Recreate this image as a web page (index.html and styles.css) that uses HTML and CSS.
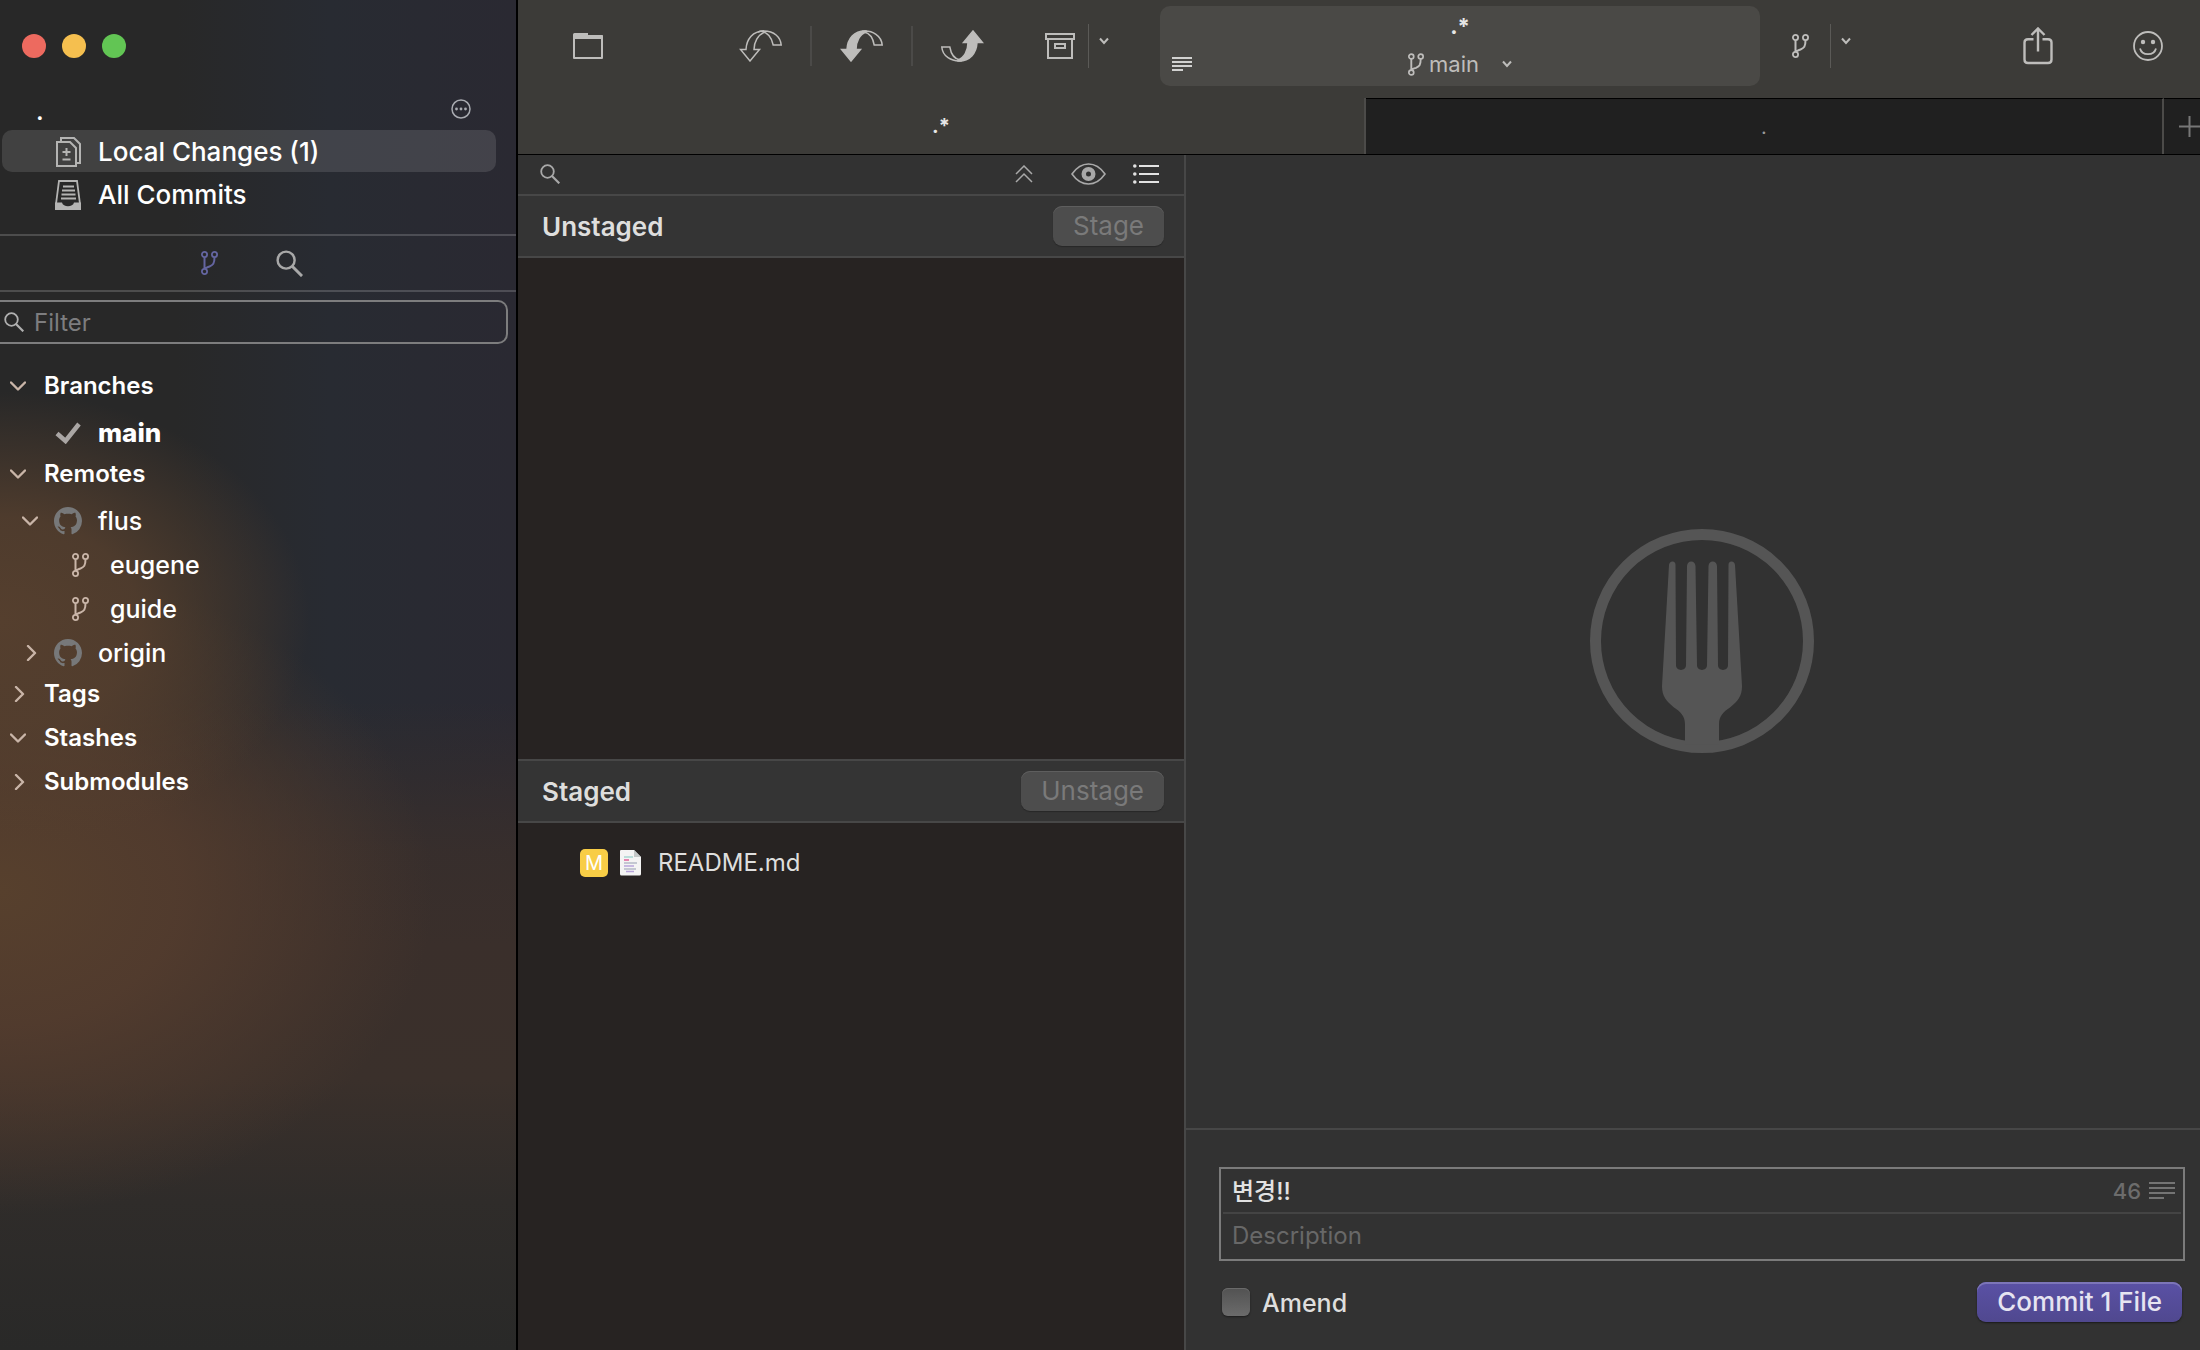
FILE: index.html
```html
<!DOCTYPE html>
<html lang="en">
<head>
<meta charset="utf-8">
<meta name="viewport" content="width=device-width, initial-scale=1">
<title>Local Changes</title>
<link rel="stylesheet" href="styles.css">
</head>
<body>
<svg class="sprite" aria-hidden="true">
  <symbol id="branch" viewBox="0 0 17 24">
    <g fill="none" stroke="currentColor" stroke-width="1.8">
      <circle cx="3.5" cy="3.5" r="2.6"/><circle cx="13.5" cy="3.5" r="2.6"/><circle cx="3.5" cy="20.5" r="2.6"/>
      <path d="M3.5 6v12M13.5 6c0 7-1.500 8-5 9.500-3 1.200-4.500 1.500-5 2.500" stroke-width="2"/>
    </g>
  </symbol>
  <symbol id="search" viewBox="0 0 20 20">
    <circle cx="7.500" cy="7.500" r="6.300" fill="none" stroke="currentColor" stroke-width="1.800"/>
    <path d="M12 12l7.300 7.300" stroke="currentColor" stroke-width="2.200"/>
  </symbol>
  <symbol id="down" viewBox="0 0 16 16">
    <path d="M1 4.500l7 7 7-7" fill="none" stroke="currentColor" stroke-width="2.400" stroke-linecap="round" stroke-linejoin="round"/>
  </symbol>
  <symbol id="right" viewBox="0 0 16 16">
    <path d="M6 1l7 7-7 7" fill="none" stroke="currentColor" stroke-width="2.400" stroke-linecap="round" stroke-linejoin="round"/>
  </symbol>
  <symbol id="small-down" viewBox="0 0 10 8">
    <path d="M1 1.500l4 4.500 4-4.500" fill="none" stroke="currentColor" stroke-width="2"/>
  </symbol>
  <symbol id="github" viewBox="0 0 16 16">
    <path fill="currentColor" d="M8 0C3.580 0 0 3.580 0 8c0 3.540 2.290 6.530 5.470 7.590.4.070.55-.17.55-.38 0-.19-.01-.82-.01-1.490-2.010.37-2.530-.49-2.690-.94-.09-.23-.48-.94-.82-1.130-.28-.15-.68-.52-.01-.53.63-.01 1.080.58 1.230.82.72 1.210 1.870.87 2.330.66.070-.52.28-.87.51-1.070-1.780-.2-3.640-.89-3.640-3.950 0-.87.31-1.590.82-2.150-.08-.2-.36-1.020.08-2.120 0 0 .67-.21 2.200.82.64-.18 1.320-.27 2-.27s1.360.09 2 .27c1.530-1.040 2.200-.82 2.200-.82.44 1.100.16 1.920.08 2.120.51.56.82 1.270.82 2.150 0 3.070-1.870 3.750-3.650 3.950.29.25.54.73.54 1.480 0 1.070-.01 1.930-.01 2.200 0 .21.15.46.55.38A8.010 8.010 0 0 0 16 8c0-4.420-3.580-8-8-8z"/>
  </symbol>
  <symbol id="archive" viewBox="0 0 30 26">
    <path d="M1 1h28v5H1zM3 6v19h24V6M10 11h10v4H10z" fill="none" stroke="currentColor" stroke-width="2"/>
  </symbol>
</svg>

<div class="app">
  <aside class="sidebar">
    <div class="lights">
      <button class="light close" aria-label="Close"></button>
      <button class="light minimize" aria-label="Minimize"></button>
      <button class="light zoom" aria-label="Zoom"></button>
    </div>
    <div class="repo">
      <span class="repo-name">.</span>
      <button class="icon-button" aria-label="More">
        <svg width="20" height="20" viewBox="0 0 20 20"><circle cx="10" cy="10" r="9" fill="none" stroke="currentColor" stroke-width="1.500"/><g fill="currentColor"><circle cx="5.500" cy="10" r="1.400"/><circle cx="10" cy="10" r="1.400"/><circle cx="14.500" cy="10" r="1.400"/></g></svg>
      </button>
    </div>
    <nav class="views">
      <a class="view selected" href="#changes">
        <svg width="26" height="30" viewBox="0 0 26 30" fill="none" stroke="currentColor" stroke-width="2"><path d="M2 5h13l6 6v18H2zM6 5V1h13l6 6v19h-4M11.500 11v8M7.500 15h8M7.500 22.500h8"/></svg>
        Local Changes (1)
      </a>
      <a class="view" href="#commits">
        <svg width="26" height="30" viewBox="0 0 26 30" fill="none" stroke="currentColor" stroke-width="1.800"><path d="M1 24L4 1h18l3 23"/><path d="M8 6.500h11M7 10.500h13M6.500 14.500h14M6 18.500h15"/><path d="M0 22.500h7c1 5 11 5 12 0h7V30H0z" fill="currentColor" stroke="none"/></svg>
        All Commits
      </a>
    </nav>
    <div class="modes">
      <button class="icon-button mode-branch" aria-label="Branches"><svg width="17" height="24"><use href="#branch"/></svg></button>
      <button class="icon-button mode-search" aria-label="Search"><svg width="27" height="27"><use href="#search"/></svg></button>
    </div>
    <label class="filter">
      <svg width="20" height="20"><use href="#search"/></svg>
      <input type="text" placeholder="Filter" aria-label="Filter">
    </label>
    <ul class="tree">
      <li class="group"><svg width="16" height="16"><use href="#down"/></svg>Branches</li>
      <li class="item current"><svg class="mark" width="26" height="22" viewBox="0 0 26 22"><path d="M2 11.500l8.500 7.500L24 2" fill="none" stroke="currentColor" stroke-width="4.500"/></svg>main</li>
      <li class="group"><svg width="16" height="16"><use href="#down"/></svg>Remotes</li>
      <li class="item remote"><svg width="16" height="16"><use href="#down"/></svg><svg class="hub" width="28" height="28"><use href="#github"/></svg>flus</li>
      <li class="item leaf"><svg width="17" height="24"><use href="#branch"/></svg>eugene</li>
      <li class="item leaf"><svg width="17" height="24"><use href="#branch"/></svg>guide</li>
      <li class="item remote"><svg width="16" height="16"><use href="#right"/></svg><svg class="hub" width="28" height="28"><use href="#github"/></svg>origin</li>
      <li class="group"><svg width="16" height="16"><use href="#right"/></svg>Tags</li>
      <li class="group"><svg width="16" height="16"><use href="#down"/></svg>Stashes</li>
      <li class="group"><svg width="16" height="16"><use href="#right"/></svg>Submodules</li>
    </ul>
  </aside>

  <div class="main">
    <header class="toolbar">
      <button class="icon-button open" aria-label="Open repository">
        <svg width="30" height="26" viewBox="0 0 30 26"><path d="M1 25V3h28v22z" fill="none" stroke="currentColor" stroke-width="2" stroke-linejoin="round"/><path d="M0 6V1.500Q0 0 1.500 0H15v2h13.500Q30 2 30 3.500V6z" fill="currentColor"/></svg>
      </button>
      <div class="sync">
        <button class="icon-button" aria-label="Fetch">
          <svg width="43" height="32" viewBox="0 0 43 32" fill="none" stroke="currentColor" stroke-width="1.500"><path d="M19 2C22 .8 23 1 25 1c10 0 16.500 6 17.200 14h-8C33 8 28 1.500 22 1.300"/><path d="M25 1C14 1 7.500 9 7 19.500H1.500L11 31l9.500-11.500H15C15 12 19 5 25 2.500"/></svg>
        </button>
        <span class="rule"></span>
        <button class="icon-button" aria-label="Pull">
          <svg width="43" height="32" viewBox="0 0 43 32" fill="none" stroke="currentColor" stroke-width="1.500"><path d="M22 1.200C33 0 41.500 6 42.200 15h-8C33 8 29 3 24 2"/><path d="M26 1C14 .5 7.500 9 7 19.500H1.500L11 31l9.500-11.500H16C16 11 20 4 26 2z" fill="currentColor"/></svg>
        </button>
        <span class="rule"></span>
        <button class="icon-button" aria-label="Push">
          <svg width="43" height="32" viewBox="0 0 43 32" fill="none" stroke="currentColor" stroke-width="1.500"><g transform="rotate(180 21.500 16)"><path d="M22 1.200C33 0 41.500 6 42.200 15h-8C33 8 29 3 24 2"/><path d="M26 1C14 .5 7.500 9 7 19.500H1.500L11 31l9.500-11.500H16C16 11 20 4 26 2z" fill="currentColor"/></g></svg>
        </button>
      </div>
      <div class="split">
        <button class="icon-button" aria-label="Stash"><svg width="30" height="26"><use href="#archive"/></svg></button>
        <button class="icon-button more" aria-label="Stash options"><svg width="10" height="8"><use href="#small-down"/></svg></button>
      </div>
      <div class="status">
        <svg width="20" height="14" viewBox="0 0 20 14"><path d="M0 1h20M0 5h20M0 9h20M0 13h11" stroke="currentColor" stroke-width="2"/></svg>
        <div class="status-text">
          <strong>.*</strong>
          <button class="branch-button"><svg width="16" height="23"><use href="#branch"/></svg>main<svg class="caret" width="10" height="8"><use href="#small-down"/></svg></button>
        </div>
      </div>
      <div class="split branch-split">
        <button class="icon-button" aria-label="New branch"><svg width="17" height="24"><use href="#branch"/></svg></button>
        <button class="icon-button more" aria-label="Branch options"><svg width="10" height="8"><use href="#small-down"/></svg></button>
      </div>
      <div class="end">
        <button class="icon-button" aria-label="Share">
          <svg width="30" height="38" viewBox="0 0 30 38" fill="none" stroke="currentColor" stroke-width="2.400"><path d="M10.500 12.200H5Q1.500 12.200 1.500 15.500v17Q1.500 36 5 36h20q3.500 0 3.500-3.500v-17q0-3.300-3.500-3.300h-5.500M15 24.500V2M8.500 8L15 1.500 21.500 8"/></svg>
        </button>
        <button class="icon-button" aria-label="Feedback">
          <svg width="30" height="30" viewBox="0 0 30 30" fill="none" stroke="currentColor" stroke-width="1.800"><circle cx="15" cy="15" r="14"/><path d="M7 17.500c2 7.500 14 7.500 16 0"/><g fill="currentColor" stroke="none"><circle cx="10" cy="11" r="2.200"/><circle cx="20" cy="11" r="2.200"/></g></svg>
        </button>
      </div>
    </header>
    <div class="tabs">
      <button class="tab active">.*</button>
      <button class="tab">.</button>
      <button class="tab add" aria-label="New tab"><svg width="21" height="21" viewBox="0 0 21 21"><path d="M0 10.500h21M10.500 0v21" stroke="currentColor" stroke-width="2"/></svg></button>
    </div>

    <div class="panes">
      <section class="files">
        <div class="list-tools">
          <svg width="20" height="20"><use href="#search"/></svg>
          <button class="icon-button collapse" aria-label="Collapse"><svg width="18" height="18" viewBox="0 0 18 18" fill="none" stroke="currentColor" stroke-width="1.500"><path d="M1 9l8-8 8 8M1 17l8-8 8 8"/></svg></button>
          <button class="icon-button eye" aria-label="Preview"><svg width="35" height="22" viewBox="0 0 35 22"><path d="M1 11Q8 1 17.500 1T34 11Q27 21 17.500 21T1 11z" fill="none" stroke="currentColor" stroke-width="1.600"/><path fill="currentColor" fill-rule="evenodd" d="M17.500 4a7 7 0 1 0 0 14 7 7 0 1 0 0-14zm0 4.500a2.500 2.500 0 1 1 0 5 2.500 2.500 0 1 1 0-5z"/></svg></button>
          <button class="icon-button rows" aria-label="List view"><svg width="26" height="20" viewBox="0 0 26 20" fill="currentColor"><circle cx="1.800" cy="2" r="1.800"/><circle cx="1.800" cy="10" r="1.800"/><circle cx="1.800" cy="18" r="1.800"/><path d="M6 1h20v2H6zM6 9h20v2H6zM6 17h20v2H6z"/></svg></button>
        </div>
        <div class="list-header"><h2>Unstaged</h2><button class="button" disabled>Stage</button></div>
        <ul class="list"></ul>
        <div class="list-header staged"><h2>Staged</h2><button class="button" disabled>Unstage</button></div>
        <ul class="list last">
          <li class="file">
            <span class="badge">M</span>
            <svg width="24" height="28" viewBox="0 0 24 28"><path d="M2 1h13l7 7v17q0 1.500-1.500 1.500h-18Q1 26.500 1 25V2q0-1 1-1z" fill="#f4f4f4"/><path d="M15 1v7h7z" fill="#c4c8c8"/><path d="M5 8h9" stroke="#a9d6d2" stroke-width="1.500"/><path d="M5 11h5" stroke="#e0629c" stroke-width="1.500"/><path d="M5 14h13M5 20h12" stroke="#b4b9c6" stroke-width="1.500"/><path d="M5 17h10M7 22.500h8" stroke="#b8a5dc" stroke-width="1.500"/></svg>
            README.md
          </li>
        </ul>
      </section>

      <section class="detail">
        <div class="empty">
          <svg width="224" height="224" viewBox="0 0 224 224">
            <circle cx="112" cy="112" r="106.500" fill="none" stroke="currentColor" stroke-width="11"/>
            <path fill="currentColor" d="M79 36q.5-3.500 3.500-3.500T85.500 36L86 136c0 6.500 10 6.500 10 0L97 37q.5-4.500 4.200-4.500T105.500 37L107 136c0 6.500 10 6.500 10 0l1.500-99q.5-4.500 4.200-4.500T127 37l1 99c0 6.500 10 6.500 10 0l.5-100q0-3.500 3-3.500t3.500 3.500l7 121c0 10-4 15-12 21.500-6 4-11 8-11 17v20H95v-20c0-9-5-13-11-17-8-6.500-12-11.500-12-21.500z"/>
          </svg>
        </div>
        <form class="commit">
          <div class="message">
            <div class="subject-row">
              <input class="subject" type="text" value="변경!!" aria-label="Subject">
              <span class="count">46</span>
              <svg width="26" height="20" viewBox="0 0 26 20"><path d="M0 2h26M0 7h26M0 12h26M0 17h15" stroke="currentColor" stroke-width="1.500"/></svg>
            </div>
            <textarea class="description" rows="1" placeholder="Description" aria-label="Description"></textarea>
          </div>
          <div class="actions">
            <label class="amend"><input type="checkbox"><span>Amend</span></label>
            <button class="button primary" type="button">Commit 1 File</button>
          </div>
        </form>
      </section>
    </div>
  </div>
</div>
</body>
</html>
```
FILE: styles.css
```css
* { box-sizing: border-box; }

body {
  margin: 0;
  background: #323232;
  color: #dededd;
  font-family: Inter, "Noto Sans CJK KR", sans-serif;
  font-size: 24px;
  line-height: 32px;
}

button, input, textarea { font: inherit; color: inherit; }
button { border: 0; padding: 0; background: none; }
svg { display: block; flex: none; }
ul { list-style: none; margin: 0; padding: 0; }
h2 { margin: 0; padding-top: 2px; font-size: 26px; font-weight: 600; }
.sprite { position: absolute; width: 0; height: 0; }
.icon-button { flex: none; }

.app {
  display: grid;
  grid-template-columns: 518px minmax(0, 1fr);
  min-height: 100vh;
}

/* Sidebar */
.sidebar {
  border-right: 2px solid #000;
  color: #fff;
  font-weight: 500;
  background:
    radial-gradient(ellipse 60% 17% at 0% 46%, #553f2e 0%, #553f2ed8 45%, #553f2e00 100%),
    radial-gradient(ellipse 84% 24% at 0% 66%, #57402d 0%, #553d2ed8 42%, #553c2e00 100%),
    linear-gradient(to bottom, #3a2f2b00 52%, #3a2f2bd0 63%, #3a2f2b 70%, #3a302b 80%, #2f2c2a 89%, #292928 100%),
    linear-gradient(to right, #282828 34%, #282b32 64%, #2a2932 100%);
}
.lights { display: flex; gap: 16px; padding: 34px 22px 0; }
.light { width: 24px; height: 24px; border-radius: 50%; }
.close { background: #ed6a5f; }
.minimize { background: #f5bf4f; }
.zoom { background: #62c554; }

.repo {
  display: flex;
  align-items: center;
  justify-content: space-between;
  height: 32px;
  margin-top: 36px;
  padding: 0 45px 0 36px;
}
.repo .icon-button { color: #a9abb1; padding-bottom: 2px; }
.repo-name { padding-top: 4px; font-weight: 600; }

.views { padding: 4px 20px 19px 2px; }
.view {
  display: flex;
  align-items: center;
  gap: 17px;
  height: 42px;
  padding: 2px 0 0 53px;
  border-radius: 10px;
  color: #fff;
  font-size: 26px;
  text-decoration: none;
}
.view + .view { margin-top: 1px; }
.view svg { color: #b4b4b3; }
.selected { background: #ffffff1e; }

.modes {
  display: flex;
  align-items: center;
  justify-content: center;
  gap: 58px;
  height: 58px;
  padding-right: 12px;
  border: solid #ffffff2c;
  border-width: 2px 0;
}
.mode-branch { color: #6465a0; }
.mode-search { color: #a8a8a8; }

.filter {
  display: flex;
  align-items: center;
  gap: 10px;
  height: 44px;
  margin: 8px 8px 0 0;
  padding-left: 4px;
  border: 2px solid #7d7d7e;
  border-left: 0;
  border-radius: 0 10px 10px 0;
  color: #b0b0b0;
}
.filter input { flex: 1; min-width: 0; padding: 2px 0 0; border: 0; background: none; outline: 0; }
.filter input::placeholder { color: #7d7d7f; opacity: 1; font-weight: 400; }

.tree { padding-top: 20px; }
.tree li { display: flex; align-items: center; height: 44px; }
.tree svg { color: #c9b5a8; }
.group { gap: 18px; padding-left: 10px; font-weight: 600; }
.tree .item { padding-top: 5px; font-size: 25px; }
.tree .current { padding-left: 55px; gap: 17px; font-size: 26px; font-weight: 800; }
.tree .mark { color: #aaa6a4; }
.remote { padding-left: 22px; gap: 16px; }
.tree .hub { color: #777879; }
.leaf { padding-left: 72px; gap: 21px; }

/* Toolbar */
.main { display: flex; flex-direction: column; min-width: 0; }
.toolbar {
  display: flex;
  align-items: center;
  height: 98px;
  padding: 0 37px 6px 55px;
  background: #3c3b38;
  color: #bebdbb;
}
.sync { display: flex; align-items: center; gap: 28px; margin-left: 136px; }
.rule { width: 2px; height: 40px; background: #4b4a48; }
.split { display: flex; align-items: center; gap: 13px; margin-left: 61px; }
.more { height: 44px; padding: 0 0 10px 10px; border-left: 1px solid #5b5a57; }
.status {
  display: grid;
  grid-template-columns: 20px 1fr 20px;
  align-items: end;
  flex: 1;
  height: 80px;
  margin-left: 51px;
  padding: 0 12px;
  border-radius: 10px;
  background: #4a4946;
}
.status > svg { margin-bottom: 15px; color: #d2d2d1; }
.status-text { display: flex; flex-direction: column; align-items: center; gap: 6px; padding-bottom: 6px; }
.status-text strong { color: #e6e6e5; font-size: 22px; font-weight: 700; }
.branch-button { display: flex; align-items: center; gap: 5px; font-size: 22px; }
.caret { margin-left: 18px; }
.branch-split { gap: 21px; margin-left: 32px; }
.end { display: flex; align-items: center; gap: 80px; margin-left: 172px; }

.tabs {
  display: grid;
  grid-template-columns: 17fr 16fr 36px;
  height: 57px;
  border-bottom: 1px solid #000;
}
.tab {
  border-top: 1px solid #000;
  border-right: 2px solid #4c4b49;
  background: #202020;
  color: #9a9a9a;
  font-size: 20px;
}
.tab.active { border-top: 0; background: #3c3b38; color: #e6e6e5; font-weight: 700; }
.tab.add { padding-left: 15px; border-right: 0; color: #777; overflow: hidden; }

/* Panes */
.panes { display: grid; grid-template-columns: 668px minmax(0, 1fr); flex: 1; }
.files { display: flex; flex-direction: column; border-right: 2px solid #474747; background: #272322; }
.list-tools {
  display: flex;
  align-items: center;
  height: 41px;
  padding: 0 25px 2px 22px;
  border-bottom: 2px solid #474747;
  background: #323232;
  color: #a9a9a9;
}
.collapse { margin-left: auto; }
.eye { margin: 0 27px 0 38px; }
.rows { color: #e2e2e2; }
.list-header {
  display: flex;
  align-items: center;
  justify-content: space-between;
  height: 62px;
  padding: 0 20px 0 24px;
  border-bottom: 2px solid #474747;
  background: #343434;
}
.staged { height: 64px; border-top: 2px solid #474747; }
.list { flex: 501 0 0; }
.last { flex-grow: 527; }
.file { display: flex; align-items: center; height: 40px; margin-top: 20px; padding-left: 62px; }
.badge {
  width: 28px;
  height: 28px;
  margin-right: 11px;
  border-radius: 5px;
  background: #f8cd46;
  color: #fff;
  font-size: 20px;
  line-height: 28px;
  text-align: center;
}
.file svg { margin-right: 15px; }

.button {
  height: 40px;
  padding: 0 20px;
  border-radius: 9px;
  background: #4d4d4d;
  color: #7a7a7a;
  font-size: 26px;
  box-shadow: inset 0 1px #5e5e5e, 0 1px 1px #00000040;
}
.primary {
  background: linear-gradient(#5a51a5, #50488f);
  color: #e6e4f1;
  font-weight: 500;
  box-shadow: inset 0 2px #7c75b8, 0 1px 2px #00000080;
}

/* Detail */
.detail { display: flex; flex-direction: column; background: #323232; }
.empty { display: grid; place-items: center; flex: 1; padding: 0 0 2px 18px; color: #555; }
.commit {
  margin: 0;
  padding: 37px 15px 28px 33px;
  border-top: 2px solid #474747;
}
.message { height: 94px; border: 2px solid #7b7b7b; }
.subject-row {
  display: flex;
  align-items: center;
  height: 45px;
  margin: 0 2px;
  padding: 0 6px 0 9px;
  border-bottom: 2px solid #444;
  color: #8a8a8a;
}
.subject { flex: 1; min-width: 0; padding: 2px 0 0; border: 0; background: none; color: #e2e2e2; font-weight: 500; outline: 0; }
.count { margin-right: 8px; color: #6c6c6c; font-size: 22px; font-weight: 500; }
.description {
  display: block;
  width: 100%;
  height: 44px;
  padding: 6px 11px;
  border: 0;
  background: none;
  outline: 0;
  resize: none;
  overflow: hidden;
}
.description::placeholder { color: #686868; opacity: 1; }
.actions { display: flex; align-items: center; justify-content: space-between; margin-top: 21px; padding: 0 3px; }
.amend { display: flex; align-items: center; gap: 12px; font-size: 25px; font-weight: 500; }
.amend span { padding-top: 2px; }
.amend input {
  appearance: none;
  width: 28px;
  height: 28px;
  margin: 0;
  border-radius: 6px;
  background: linear-gradient(#525252, #6b6b6b);
  box-shadow: inset 0 1px #6a6a6a, 0 1px 2px #00000070;
}
```
